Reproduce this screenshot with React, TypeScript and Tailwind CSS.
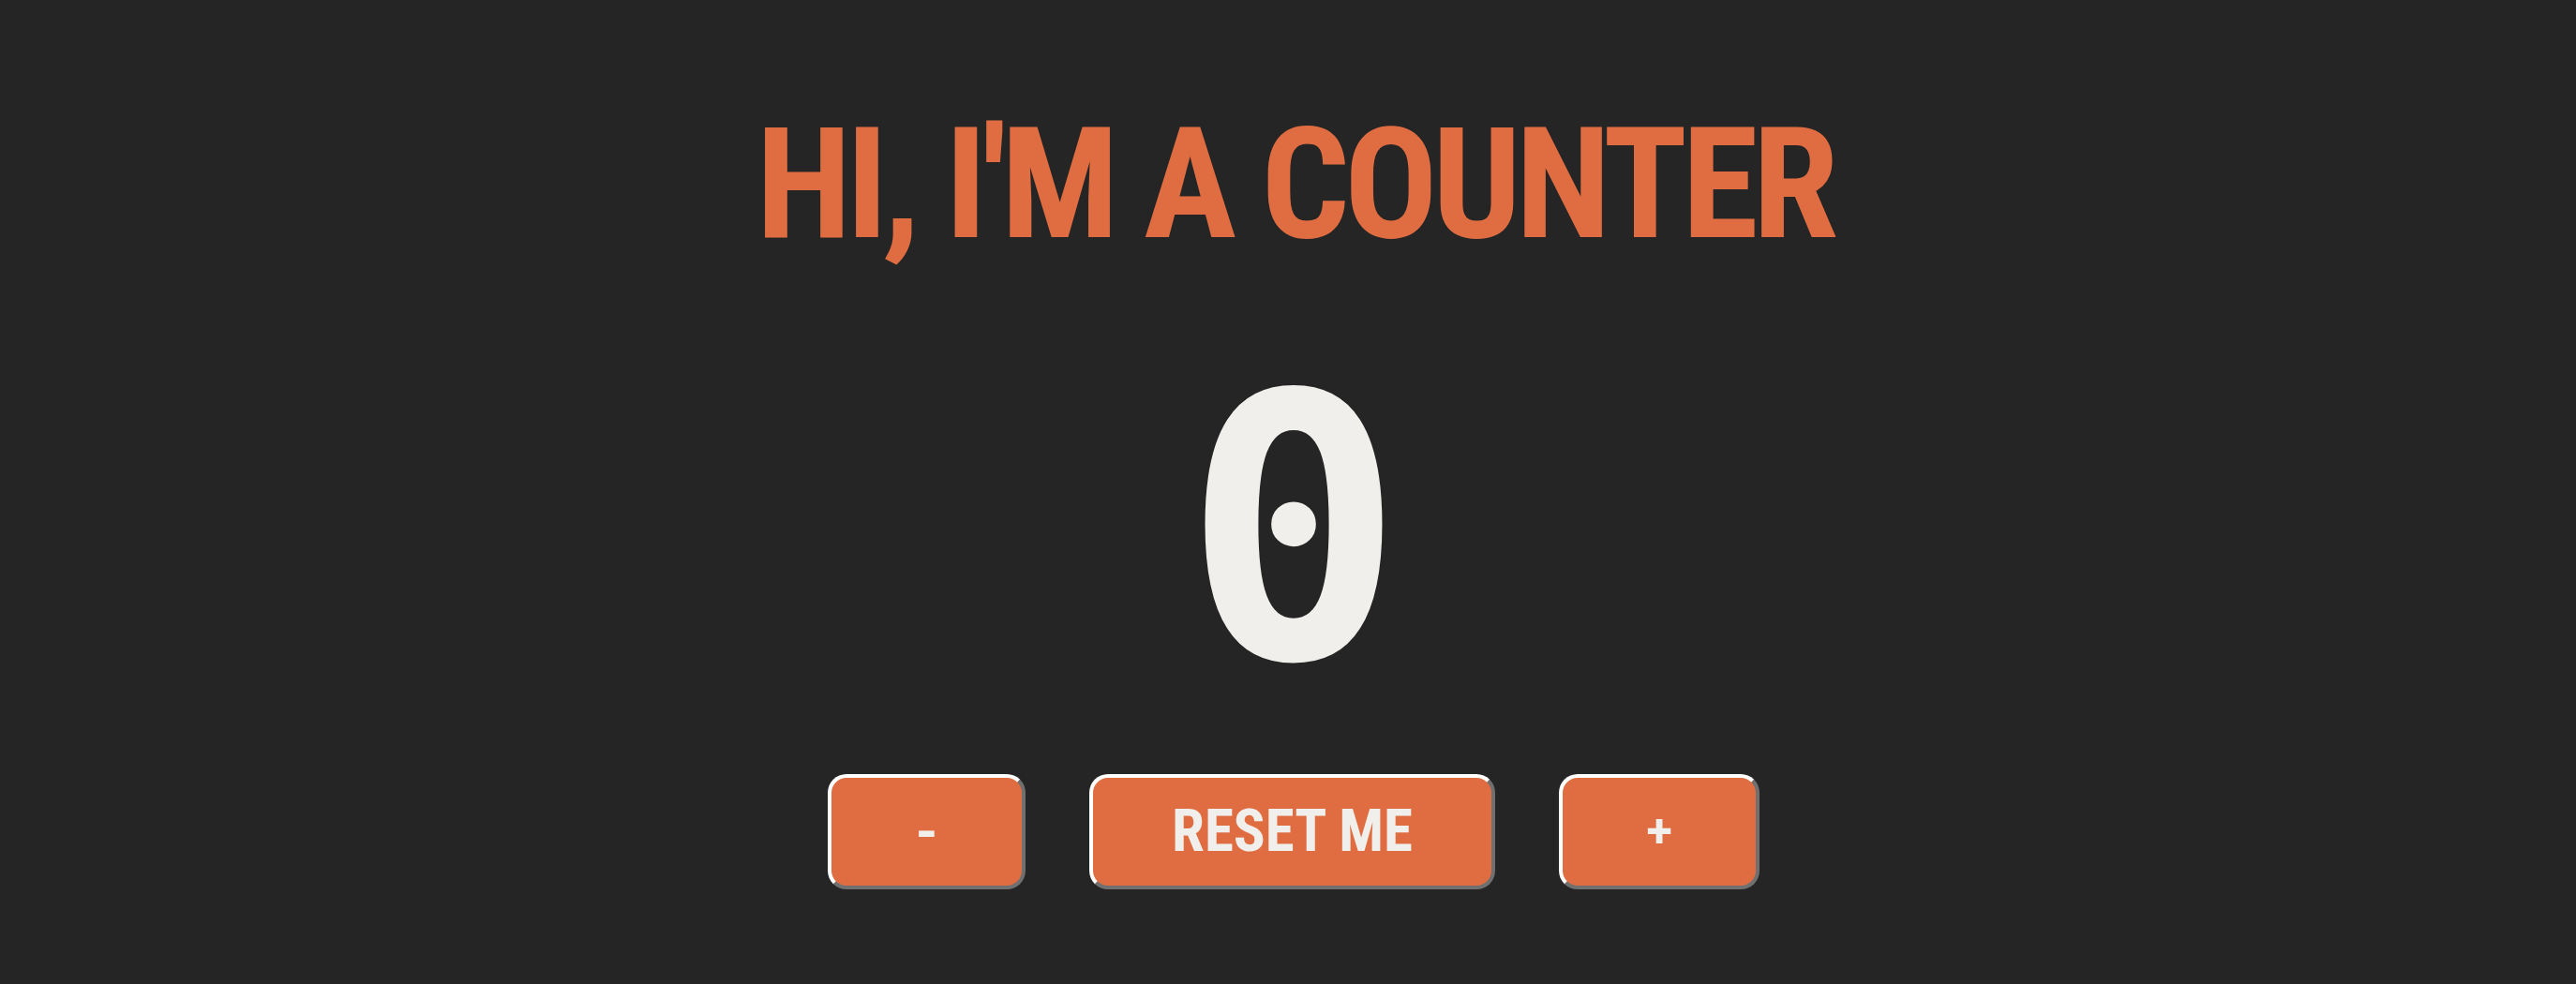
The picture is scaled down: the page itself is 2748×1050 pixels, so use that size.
import { useState } from "react";

export default function App() {
  const [count, setCount] = useState(0);

  return (
    <div className="min-h-screen w-full bg-[#252525] flex flex-col items-center font-['Roboto',sans-serif]">
      {/* Heading */}
      <h1 className="mt-[114px] ml-[14px] text-[166px] leading-none font-bold font-stretch-condensed text-[#e06d41] tracking-[-6px] whitespace-nowrap">
        HI, I'M A COUNTER
      </h1>

      {/* Count */}
      <div className="mt-[90px] ml-[12px] text-[392px] leading-none font-bold text-[#f0efeb] font-['DejaVu_Sans_Mono',monospace]">
        {count}
      </div>

      {/* Controls */}
      <div className="mt-[64px] ml-[12px] flex items-center gap-[68px]">
        <button
          onClick={() => setCount(count - 1)}
          className="w-[211px] h-[123px] rounded-[20px] bg-[#e06d41] border-4 border-t-white border-l-white border-r-[#707070] border-b-[#707070] text-[60px] font-bold text-[#f0efeb] cursor-pointer"
        >
          -
        </button>
        <button
          onClick={() => setCount(0)}
          className="w-[433px] h-[123px] rounded-[20px] bg-[#e06d41] border-4 border-t-white border-l-white border-r-[#707070] border-b-[#707070] text-[63px] font-bold font-stretch-semi-condensed text-[#f0efeb] cursor-pointer"
        >
          RESET ME
        </button>
        <button
          onClick={() => setCount(count + 1)}
          className="w-[214px] h-[123px] rounded-[20px] bg-[#e06d41] border-4 border-t-white border-l-white border-r-[#707070] border-b-[#707070] text-[50px] font-bold text-[#f0efeb] cursor-pointer"
        >
          +
        </button>
      </div>
    </div>
  );
}
